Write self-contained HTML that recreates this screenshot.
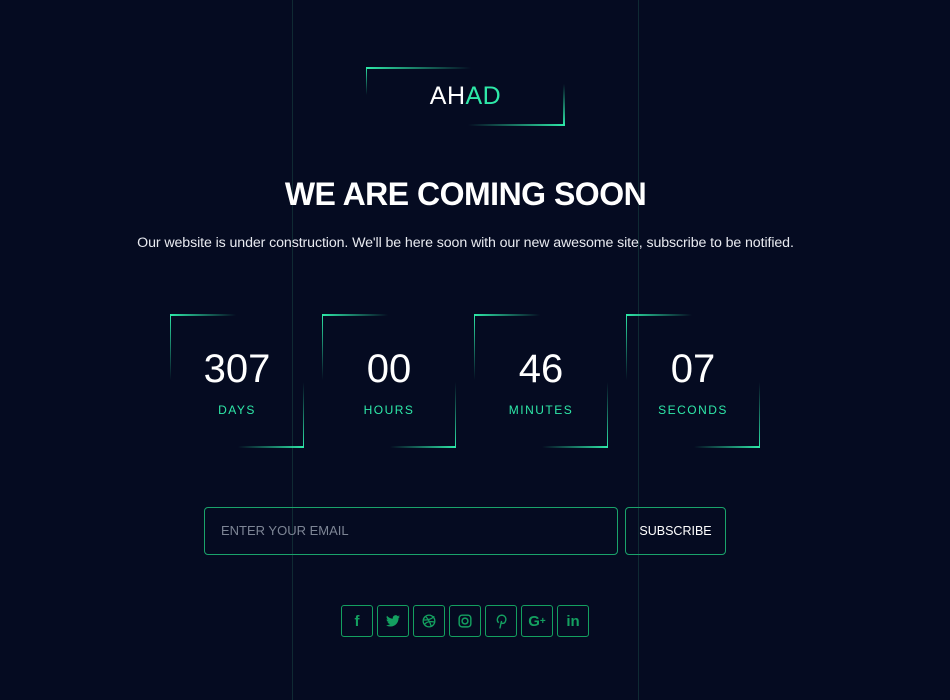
<!DOCTYPE html>
<html><head><meta charset="utf-8"><style>
*{margin:0;padding:0;box-sizing:border-box}
body{width:950px;height:700px;background:#050b21;font-family:"Liberation Sans",sans-serif;color:#fff;position:relative;overflow:hidden}
.vl{position:absolute;top:0;width:1px;height:700px;background:#0f2a33}
.abs{position:absolute}
.logo{position:absolute;left:366px;top:67px;width:199px;height:59px;text-align:center;font-size:25px;line-height:58px;letter-spacing:0.5px}
.logo span{color:#2ee8a8}
h1{position:absolute;top:176px;left:0;width:931px;text-align:center;font-size:32px;font-weight:bold;letter-spacing:-0.5px}
p.sub{position:absolute;top:235px;left:0;width:931px;text-align:center;font-size:14.2px;color:#e8eaf0;letter-spacing:-0.1px}
.box{position:absolute;top:314px;width:134px;height:134px;text-align:center}
.box .n{position:absolute;top:33px;width:100%;font-size:40px;color:#fff}
.box .l{position:absolute;top:89px;width:100%;font-size:12px;letter-spacing:1.5px;color:#2ee8a8}
.tl{position:absolute;left:0;top:0;height:2px;width:66px;background:linear-gradient(90deg,#2ee8a8,rgba(46,232,168,0))}
.tv{position:absolute;left:0;top:0;width:1px;height:66px;background:linear-gradient(180deg,#2ee8a8,rgba(46,232,168,0))}
.bl{position:absolute;right:0;bottom:0;height:2px;width:66px;background:linear-gradient(270deg,#2ee8a8,rgba(46,232,168,0))}
.bv{position:absolute;right:0;bottom:0;width:1px;height:66px;background:linear-gradient(0deg,#2ee8a8,rgba(46,232,168,0))}
.inp{position:absolute;left:204px;top:507px;width:414px;height:48px;border:1px solid #1aa36b;border-radius:4px;font-size:13px;color:#7d8595;line-height:46px;padding-left:16px}
.btn{position:absolute;left:625px;top:507px;width:101px;height:48px;border:1px solid #1aa36b;border-radius:4px;font-size:12.5px;line-height:46px;text-align:center;color:#fff}
.s{position:absolute;top:605px;width:32px;height:32px;border:1px solid #14a060;border-radius:3px;display:flex;align-items:center;justify-content:center;color:#14a060;font-weight:bold;font-size:15px}
</style></head><body>
<div class="vl" style="left:292px"></div><div class="vl" style="left:638px"></div>
<div class="logo">
<div class="abs" style="left:0;top:0;height:2px;width:105px;background:linear-gradient(90deg,#2ee8a8,rgba(46,232,168,0))"></div>
<div class="abs" style="left:0;top:0;width:1px;height:28px;background:linear-gradient(180deg,#2ee8a8,rgba(46,232,168,0))"></div>
<div class="abs" style="right:0;bottom:0;height:2px;width:97px;background:linear-gradient(270deg,#2ee8a8,rgba(46,232,168,0))"></div>
<div class="abs" style="right:0;bottom:0;width:2px;height:42px;background:linear-gradient(0deg,#2ee8a8,rgba(46,232,168,0))"></div>
AH<span>AD</span></div>
<h1>WE ARE COMING SOON</h1>
<p class="sub">Our website is under construction. We'll be here soon with our new awesome site, subscribe to be notified.</p>
<div class="box" style="left:170px"><div class="tl"></div><div class="tv"></div><div class="bl"></div><div class="bv"></div><div class="n">307</div><div class="l">DAYS</div></div>
<div class="box" style="left:322px"><div class="tl"></div><div class="tv"></div><div class="bl"></div><div class="bv"></div><div class="n">00</div><div class="l">HOURS</div></div>
<div class="box" style="left:474px"><div class="tl"></div><div class="tv"></div><div class="bl"></div><div class="bv"></div><div class="n">46</div><div class="l">MINUTES</div></div>
<div class="box" style="left:626px"><div class="tl"></div><div class="tv"></div><div class="bl"></div><div class="bv"></div><div class="n">07</div><div class="l">SECONDS</div></div>
<div class="inp">ENTER YOUR EMAIL</div>
<div class="btn">SUBSCRIBE</div>
<div class="s" style="left:341px">f</div>
<div class="s" style="left:377px"><svg width="14" height="12" viewBox="0 0 24 20"><path fill="#14a060" d="M24 2.4a10 10 0 0 1-2.8.8A5 5 0 0 0 23.3.4a10 10 0 0 1-3.1 1.2A4.9 4.9 0 0 0 11.8 6 14 14 0 0 1 1.7.9a4.9 4.9 0 0 0 1.5 6.6 5 5 0 0 1-2.2-.6 4.9 4.9 0 0 0 3.9 4.8 5 5 0 0 1-2.2.1 4.9 4.9 0 0 0 4.6 3.4A9.9 9.9 0 0 1 0 17.2 14 14 0 0 0 7.5 19.4c9.1 0 14-7.5 14-14v-.6A10 10 0 0 0 24 2.4z"/></svg></div>
<div class="s" style="left:413px"><svg width="14" height="14" viewBox="0 0 24 24" fill="none" stroke="#14a060" stroke-width="2.2"><circle cx="12" cy="12" r="10"/><path d="M6 4c5 5 8 10 10 18M2 10c7 1 13 0 19-6M4 18c4-5 10-6 18-4"/></svg></div>
<div class="s" style="left:449px"><svg width="14" height="14" viewBox="0 0 24 24" fill="none" stroke="#14a060" stroke-width="2.5"><rect x="2" y="2" width="20" height="20" rx="5"/><circle cx="12" cy="12" r="5"/></svg></div>
<div class="s" style="left:485px"><svg width="12" height="15" viewBox="0 0 20 26" fill="none" stroke="#14a060" stroke-width="2.4"><path d="M8 25l3-13M6 15C2 12 3 3 11 2c7 0 9 7 6 12-2 3-6 3-7 0"/></svg></div>
<div class="s" style="left:521px">G<span style="font-size:10px">+</span></div>
<div class="s" style="left:557px">in</div>
</body></html>
